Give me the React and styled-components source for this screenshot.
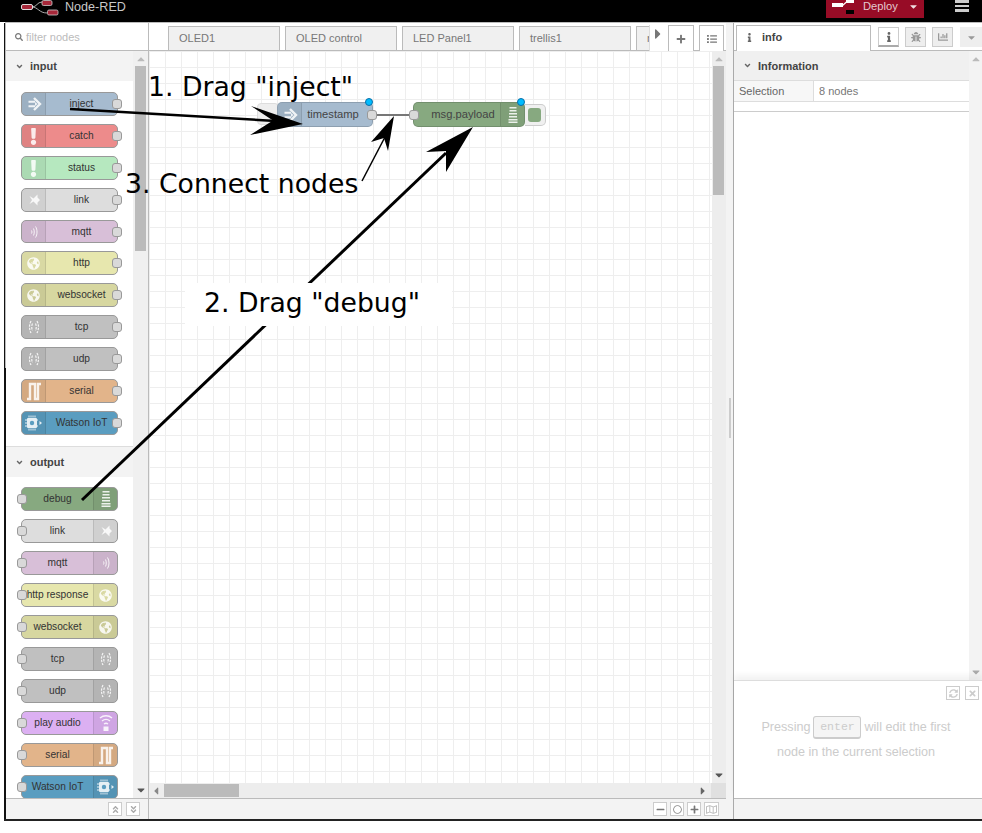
import React from 'react';
import styled, { createGlobalStyle } from 'styled-components';
import {
  FaSearch, FaAngleDown, FaCaretDown, FaCaretRight, FaCaretUp, FaPlus, FaList, FaInfo, FaBug, FaChartBar,
  FaMinus, FaRegCircle, FaRegMap, FaSyncAlt, FaTimes, FaAngleDoubleUp, FaAngleDoubleDown, FaExclamation, FaGlobeAmericas,
} from 'react-icons/fa';

const GlobalStyle = createGlobalStyle`
  html, body { margin: 0; padding: 0; background: #fff; }
  body { font-family: "Liberation Sans", Arial, sans-serif; color: #555; }
`;

const Page = styled.div`
  position: relative;
  width: 982px;
  height: 833px;
  overflow: hidden;
  background: #fff;
`;

const Header = styled.header`
  height: 22px;
  background: #000;
  display: flex;
  align-items: flex-start;
  color: #c8c8c8;
`;

const Brand = styled.div`
  display: flex;
  align-items: flex-start;
  gap: 6px;
  margin-left: 21px;
  font-size: 12.6px;
  line-height: 15px;
`;

const DeployButton = styled.div`
  margin-left: auto;
  width: 98px;
  height: 18px;
  background: #970c26;
  color: #e4c9cf;
  font-size: 11.2px;
  line-height: 13px;
  display: flex;
  align-items: flex-start;
  box-sizing: border-box;
  padding-left: 6px;

  svg { flex: none; }
  span { margin-left: 9px; }
  .caret { margin: 1px 0 0 10px; color: #f0e0e3; font-size: 11px; }
`;

const Burger = styled.div`
  width: 14px;
  margin: 0 13px 0 31px;
  display: flex;
  flex-direction: column;
  gap: 2px;

  i { display: block; height: 2.5px; background: #ccc; }
`;

const Main = styled.div`
  display: flex;
  height: 796px;
  margin-left: 4px;
  border-top: 1px solid #bbb;
  border-bottom: 2px solid #222;
  position: relative;

  &::before {
    content: "";
    position: absolute;
    left: 0;
    top: -1px;
    height: 345px;
    width: 1px;
    background: #fff;
  }
`;

const Palette = styled.aside`
  width: 145px;
  flex: none;
  box-sizing: border-box;
  border-left: 2px solid #111;
  border-right: 1px solid #bbb;
  display: flex;
  flex-direction: column;
  position: relative;

  &::before {
    content: "";
    position: absolute;
    left: -1px;
    top: -1px;
    height: 346px;
    width: 1px;
    background: #bbb;
  }
`;

const FilterRow = styled.div`
  height: 28px;
  flex: none;
  box-sizing: border-box;
  border-bottom: 1px solid #bbb;
  display: flex;
  align-items: center;
  gap: 3px;
  padding-left: 9px;
  font-size: 11px;
  color: #bbb;

  svg { color: #777; font-size: 8px; }
`;

const PaletteBody = styled.div`
  flex: 1;
  min-height: 0;
  display: flex;
`;

const PaletteList = styled.div`
  flex: 1;
  min-width: 0;
  overflow: hidden;
`;

const Category = styled.div`
  height: 30px;
  box-sizing: border-box;
  padding-left: 9px;
  background: #f3f3f3;
  display: flex;
  align-items: center;
  gap: 6px;
  font-size: 11px;
  font-weight: bold;
  color: #444;

  svg { font-size: 9px; color: #666; }
`;

const NodeList = styled.div`
  display: flex;
  flex-direction: column;
  gap: 8px;
  padding: ${p => p.$top}px 0 11px 15px;
  border-bottom: ${p => (p.$divided ? '1px solid #ddd' : 'none')};
`;

const PaletteNode = styled.div`
  position: relative;
  width: 97px;
  height: ${p => p.$height || 24}px;
  box-sizing: border-box;
  flex: none;
  border: 1px solid #999;
  border-radius: 5px;
  background: ${p => p.$color};
  display: flex;
  flex-direction: ${p => (p.$output ? 'row-reverse' : 'row')};
  font-size: 10.2px;
  color: #333;
`;

const NodeLabel = styled.div`
  flex: 1;
  min-width: 0;
  text-align: center;
  white-space: nowrap;
  line-height: 22px;
`;

const FlowLabel = styled(NodeLabel)`
  line-height: 23px;
  padding: 0 ${p => p.$padRight || 0}px 0 ${p => p.$padLeft || 0}px;
`;

const NodeIcon = styled.div`
  width: 24px;
  flex: none;
  box-sizing: border-box;
  background: rgba(0, 0, 0, 0.06);
  border-${p => (p.$output ? 'left' : 'right')}: 1px solid rgba(0, 0, 0, 0.1);
  border-radius: ${p => (p.$output ? '0 4px 4px 0' : '4px 0 0 4px')};
  display: flex;
  align-items: center;
  justify-content: center;
  color: rgba(255, 255, 255, 0.85);
`;

const Port = styled.span`
  position: absolute;
  top: 50%;
  ${p => (p.$left ? 'left: -5px;' : 'right: -5px;')}
  width: 8px;
  height: 8px;
  margin-top: -5px;
  border: 1px solid #999;
  border-radius: 3px;
  background: #d9d9d9;
`;

const VScroll = styled.div`
  width: ${p => p.$width}px;
  flex: none;
  background: ${p => p.$track};
  position: relative;
  display: flex;
  flex-direction: column;
  align-items: center;
  justify-content: space-between;
  padding: 2px 0;
  box-sizing: border-box;
  color: ${p => p.$arrow};
  font-size: 12px;

  svg { display: block; }
`;

const VThumb = styled.div`
  position: absolute;
  left: ${p => p.$left}px;
  right: 2px;
  top: 15px;
  height: ${p => p.$height}px;
  background: #bbb;
`;

const BarFooter = styled.div`
  height: 21px;
  flex: none;
  box-sizing: border-box;
  background: #f3f3f3;
  border-top: 1px solid #bbb;
  display: flex;
  align-items: center;
  justify-content: flex-end;
  gap: ${p => p.$gap}px;
  padding-right: ${p => p.$right}px;
`;

const FootButton = styled.div`
  width: ${p => p.$width || 14}px;
  height: 14px;
  box-sizing: border-box;
  border: 1px solid #ccc;
  background: #fff;
  color: ${p => p.$tone || '#888'};
  display: flex;
  align-items: center;
  justify-content: center;
  font-size: 9px;
`;

const Workspace = styled.main`
  width: 577px;
  flex: none;
  display: flex;
  flex-direction: column;
`;

const TabBar = styled.div`
  height: 28px;
  flex: none;
  box-sizing: border-box;
  border-bottom: 1px solid #bbb;
  display: flex;
  align-items: flex-end;
  padding-left: 19px;
`;

const FlowTab = styled.div`
  width: ${p => p.$width || 112}px;
  height: 25px;
  flex: none;
  box-sizing: border-box;
  margin-right: 5px;
  margin-bottom: -1px;
  padding: 5px 0 0 10px;
  border: 1px solid #bbb;
  border-bottom: 1px solid #bbb;
  background: #f0f0f0;
  overflow: hidden;
  white-space: nowrap;
  font-size: 11px;
  color: #777;
`;

const TabScroll = styled.div`
  width: 19px;
  height: 26px;
  flex: none;
  box-sizing: border-box;
  margin: 0 0 -1px -6px;
  background: #fff;
  border-left: 1px solid #ddd;
  color: #777;
  font-size: 16px;

  svg { display: block; margin: 1px 0 0 0; }
`;

const TabAction = styled.div`
  width: ${p => p.$width}px;
  height: 26px;
  flex: none;
  box-sizing: border-box;
  margin-right: 5px;
  margin-bottom: -1px;
  border: 1px solid #bbb;
  border-bottom: none;
  background: #fff;
  color: #777;
  font-size: 10px;
  display: flex;
  align-items: center;
  justify-content: center;
`;

const CanvasBody = styled.div`
  flex: 1;
  min-height: 0;
  display: flex;
`;

const Grid = styled.div`
  flex: 1;
  position: relative;
  background-color: #fff;
  background-image:
    linear-gradient(#eee 1px, transparent 1px),
    linear-gradient(90deg, #eee 1px, transparent 1px);
  background-size: 16px 16px;
`;

const HScroll = styled.div`
  height: 15px;
  flex: none;
  background: #ededed;
  display: flex;
  align-items: center;
  color: #888;
  font-size: 12px;
  padding-left: 1px;

  .left { transform: scaleX(-1); }
  .right { margin-left: auto; margin-right: 2px; color: #666; }
`;

const HThumb = styled.div`
  width: 75px;
  height: 13px;
  margin-left: 2px;
  background: #bbb;
`;

const ScrollCorner = styled.div`
  width: 15px;
  height: 15px;
  background: #e0e0e0;
`;

const FlowNode = styled.div`
  position: absolute;
  left: ${p => p.$x}px;
  top: 51px;
  width: ${p => p.$width}px;
  height: 25px;
  box-sizing: border-box;
  border: 1px solid rgba(0, 0, 0, 0.15);
  border-radius: 5px;
  background: ${p => p.$color};
  display: flex;
  flex-direction: ${p => (p.$output ? 'row-reverse' : 'row')};
  font-size: 11.2px;
  color: #444;
`;

const ChangedDot = styled.span`
  position: absolute;
  top: -5px;
  right: -1px;
  width: 6px;
  height: 6px;
  border: 1px solid #0a6fa8;
  border-radius: 50%;
  background: #00bcff;
`;

const StubLeft = styled.div`
  position: absolute;
  left: 108px;
  top: 52px;
  width: 22px;
  height: 22px;
  box-sizing: border-box;
  border: 1px solid #ddd;
  border-radius: 4px;
  background: #eee;
`;

const Wire = styled.div`
  position: absolute;
  left: 228px;
  top: 63px;
  width: 32px;
  height: 2px;
  background: #777;
`;

const DebugToggle = styled.div`
  position: absolute;
  left: 376px;
  top: 53px;
  width: 21px;
  height: 22px;
  box-sizing: border-box;
  border: 1px solid #ccc;
  border-left: none;
  border-radius: 0 5px 5px 0;
  background: #f0f0f0;
  padding: 3px 4px 3px 3px;

  i { display: block; width: 13px; height: 14px; border-radius: 3px; background: #87a980; }
`;

const Divider = styled.div`
  width: 7px;
  flex: none;
  background: #f3f3f3;
  display: flex;
  align-items: center;
  justify-content: center;

  i { display: block; width: 2px; height: 40px; margin-bottom: 6px; background: #ccc; }
`;

const Sidebar = styled.aside`
  flex: 1;
  min-width: 0;
  box-sizing: border-box;
  border-left: 1px solid #aaa;
  display: flex;
  flex-direction: column;
`;

const SideTabs = styled.div`
  height: 28px;
  flex: none;
  box-sizing: border-box;
  border-bottom: 1px solid #bbb;
  display: flex;
  align-items: flex-start;
  padding: 2px 0 0 2px;
`;

const SideTab = styled.div`
  width: 135px;
  height: 26px;
  flex: none;
  box-sizing: border-box;
  border: 1px solid #bbb;
  border-bottom: none;
  background: #fff;
  display: flex;
  align-items: center;
  gap: 8px;
  padding: 0 0 3px 8px;
  font-size: 11px;
  font-weight: bold;
  color: #444;

  svg { font-size: 9px; color: #666; }
`;

const SideButton = styled.div`
  width: 21px;
  height: 20px;
  flex: none;
  box-sizing: border-box;
  margin: 2px 0 0 ${p => p.$gap}px;
  border: 1px solid #ccc;
  border-bottom: ${p => (p.$active ? '2px solid #aaa' : '1px solid #ccc')};
  background: ${p => (p.$active ? '#fff' : '#eee')};
  color: ${p => (p.$active ? '#666' : '#999')};
  font-size: 10px;
  display: flex;
  align-items: center;
  justify-content: center;
`;

const SideMenu = styled.div`
  width: 22px;
  height: 20px;
  margin: 2px 0 0 7px;
  background: #eee;
  color: #999;
  font-size: 11px;
  display: flex;
  align-items: center;
  justify-content: center;
`;

const InfoPanel = styled.div`
  flex: 1;
  min-height: 0;
  display: flex;
`;

const InfoContent = styled.div`
  flex: 1;
  min-width: 0;
`;

const SectionHead = styled.div`
  height: 30px;
  box-sizing: border-box;
  border-bottom: 1px solid #ddd;
  background: #f0f0f0;
  display: flex;
  align-items: center;
  gap: 6px;
  padding-left: 9px;
  font-size: 11px;
  font-weight: bold;
  color: #444;

  svg { font-size: 9px; color: #666; }
`;

const InfoRow = styled.div`
  height: 21px;
  box-sizing: border-box;
  border-bottom: 1px solid #ddd;
  display: flex;
  font-size: 11px;
  line-height: 21px;
  color: #666;
`;

const InfoKey = styled.div`
  width: 80px;
  box-sizing: border-box;
  padding-left: 5px;
  background: #f7f7f7;
  border-right: 1px solid #ddd;
`;

const InfoValue = styled.div`
  padding-left: 5px;
  color: #777;
`;

const InfoGap = styled.div`
  height: 9px;
  border-bottom: 1px solid #ccc;
`;

const HelpPanel = styled.div`
  height: 118px;
  flex: none;
  box-sizing: border-box;
  border-top: 1px solid #ddd;
  box-shadow: 0 -5px 6px rgba(0, 0, 0, 0.05);
  position: relative;
  background: #fff;
  padding-top: 5px;
`;

const HelpTools = styled.div`
  display: flex;
  justify-content: flex-end;
  gap: 5px;
  padding-right: 3px;
`;

const HelpText = styled.p`
  margin: 15px 4px 0 0;
  text-align: center;
  font-size: 12.6px;
  line-height: 25px;
  color: #ccc;
`;

const Key = styled.span`
  display: inline-block;
  width: 48px;
  height: 23px;
  box-sizing: border-box;
  margin: 0 3px;
  border: 1px solid #ccc;
  border-bottom-width: 2px;
  border-radius: 3px;
  background: #f5f5f5;
  font-family: "Liberation Mono", monospace;
  font-size: 11.5px;
  line-height: 20px;
  vertical-align: middle;
`;

const Overlay = styled.svg`
  position: absolute;
  left: 0;
  top: 0;
  pointer-events: none;
`;

const Annotation = styled.div`
  position: absolute;
  left: ${p => p.$x}px;
  top: ${p => p.$y}px;
  font-family: "DejaVu Sans", sans-serif;
  font-size: 26.7px;
  line-height: 32px;
  color: #000;
  white-space: nowrap;
`;

const PaddedAnnotation = styled(Annotation)`
  box-sizing: border-box;
  width: 267px;
  height: 43px;
  padding: 4px 0 0 19px;
  background: #fff;
`;

/* node icons */
const Glyph = ({ children }) => (
  <svg width="16" height="18" viewBox="0 0 16 18" fill="currentColor" stroke="none">{children}</svg>
);

const InjectIcon = () => (
  <svg width="16" height="18" viewBox="0 0 16 18" fill="none" stroke="currentColor">
    <path d="M2.500 6.800h6.500M2.500 11.200h6.500" strokeWidth="2" />
    <path d="M8 3l6 6-6 6" strokeWidth="2.400" />
    <path d="M9 7l2.500 2L9 11z" fill="currentColor" stroke="none" />
  </svg>
);
const LinkIcon = () => (
  <Glyph><path d="M3.500 5l4 2.500L11.500 3.500v3L14 9l-2.500 2.500v3l-4-4-4 2.500 2.500-4z" /></Glyph>
);
const BridgeIcon = () => (
  <Glyph>
    <g fill="none" stroke="currentColor" strokeWidth="1">
      <path d="M5.500 7.500c.5 1 .5 2 0 3" />
      <path d="M7.500 5.500c1 2 1 5 0 7" />
      <path d="M9.500 3.500c2 3 2 8 0 11" />
    </g>
  </Glyph>
);
const TcpIcon = () => (
  <Glyph>
    <g fill="none" stroke="currentColor" strokeWidth="1.200" strokeDasharray="2.500 1">
      <path d="M6.500 5.500c-1 2-1 5 0 7" />
      <path d="M5 3c-2 4-2 8 0 12" />
      <path d="M9.500 5.500c1 2 1 5 0 7" />
      <path d="M11 3c2 4 2 8 0 12" />
    </g>
  </Glyph>
);
const SerialIcon = () => (
  <svg width="16" height="20" viewBox="0 0 16 20" fill="none" stroke="currentColor" strokeWidth="2.400">
    <path d="M1 18h3V3h5v15h3V3h3" />
  </svg>
);
const ChipIcon = () => (
  <svg width="18" height="16" viewBox="0 0 18 16" stroke="currentColor">
    <rect x="2" y="3" width="10" height="10" rx="1" fill="currentColor" stroke="none" />
    <circle cx="7" cy="8" r="2.200" fill="#5a9dc0" stroke="none" />
    <path d="M4 0.500v2M6 0.500v2M8 0.500v2M10 0.500v2M4 13.500v2M6 13.500v2M8 13.500v2M10 13.500v2M0 5h2M0 8h2M0 11h2M12 5h1M12 11h1" strokeWidth="1" />
    <path d="M14.500 6l2.500 2-2.500 2z" fill="currentColor" stroke="none" />
  </svg>
);
const DebugIcon = () => (
  <svg width="10" height="16" viewBox="0 0 10 16" fill="currentColor">
    <rect x="1.500" y="0" width="7" height="1.500" />
    <rect x="1.500" y="3" width="7" height="1.500" />
    <rect x="1" y="6" width="8" height="1.500" />
    <rect x="1" y="9" width="8" height="1.500" />
    <rect x="0.500" y="12" width="9" height="1.500" />
    <rect x="0.500" y="14.500" width="9" height="1.500" />
  </svg>
);
const AudioIcon = () => (
  <svg width="14" height="18" viewBox="0 0 14 18" fill="none" stroke="currentColor" strokeWidth="1.400">
    <path d="M1 4c3.500-3 8.500-3 12 0" />
    <path d="M3 7c2.500-2 5.500-2 8 0" />
    <path d="M5 10c1.500-1 2.500-1 4 0" />
    <rect x="4.500" y="12.500" width="5" height="4.500" fill="currentColor" stroke="none" />
  </svg>
);
const Bang = () => <FaExclamation size={17} />;
const Globe = () => <FaGlobeAmericas size={13} />;

const Logo = () => (
  <svg width="38" height="16" viewBox="0 0 38 16">
    <path d="M11 7c5 0 5-5 10-5M11 7c6 0 7 6 15 6" fill="none" stroke="#aaa" strokeWidth="1" />
    <rect x="0.500" y="4.500" width="11" height="5" rx="1.500" fill="#a6283a" stroke="#ddd" strokeWidth="1" />
    <rect x="21" y="0.500" width="10" height="5" rx="1.500" fill="#a6283a" stroke="#ccc" strokeWidth="0.800" />
    <rect x="26.500" y="10" width="10.500" height="5" rx="1.500" fill="#a6283a" stroke="#ccc" strokeWidth="0.800" />
  </svg>
);

const DeployIcon = () => (
  <svg width="22" height="15" viewBox="0 0 22 15">
    <rect x="0" y="3" width="11" height="4" fill="#fff" />
    <path d="M10 6L15 1.500" stroke="#fff" strokeWidth="1.200" />
    <rect x="14" y="0" width="8" height="3" fill="#fff" />
    <rect x="14" y="10" width="8" height="4" fill="#000" />
  </svg>
);

const inputNodes = [
  { label: 'inject', color: '#a6bbcf', icon: <InjectIcon /> },
  { label: 'catch', color: '#ed8b8b', icon: <Bang /> },
  { label: 'status', color: '#b6e8bf', icon: <Bang /> },
  { label: 'link', color: '#dddddd', icon: <LinkIcon /> },
  { label: 'mqtt', color: '#d8bfd8', icon: <BridgeIcon />, height: 23 },
  { label: 'http', color: '#e7e7ae', icon: <Globe /> },
  { label: 'websocket', color: '#d7d7a0', icon: <Globe /> },
  { label: 'tcp', color: '#c0c0c0', icon: <TcpIcon /> },
  { label: 'udp', color: '#c0c0c0', icon: <TcpIcon /> },
  { label: 'serial', color: '#e2b48a', icon: <SerialIcon /> },
  { label: 'Watson IoT', color: '#5a9dc0', icon: <ChipIcon /> },
];

const outputNodes = [
  { label: 'debug', color: '#87a980', icon: <DebugIcon /> },
  { label: 'link', color: '#dddddd', icon: <LinkIcon /> },
  { label: 'mqtt', color: '#d8bfd8', icon: <BridgeIcon /> },
  { label: 'http response', color: '#e7e7ae', icon: <Globe /> },
  { label: 'websocket', color: '#d7d7a0', icon: <Globe /> },
  { label: 'tcp', color: '#c0c0c0', icon: <TcpIcon /> },
  { label: 'udp', color: '#c0c0c0', icon: <TcpIcon /> },
  { label: 'play audio', color: '#dcb0f2', icon: <AudioIcon /> },
  { label: 'serial', color: '#e2b48a', icon: <SerialIcon /> },
  { label: 'Watson IoT', color: '#5a9dc0', icon: <ChipIcon /> },
];

const flowTabs = ['OLED1', 'OLED control', 'LED Panel1', 'trellis1'];

const App = () => {
  return (
    <Page>
      <GlobalStyle />
      <Header>
        <Brand><Logo />Node-RED</Brand>
        <DeployButton>
          <DeployIcon />
          <span>Deploy</span>
          <FaCaretDown className="caret" />
        </DeployButton>
        <Burger><i /><i /><i /></Burger>
      </Header>

      <Main>
        <Palette>
          <FilterRow><FaSearch />filter nodes</FilterRow>
          <PaletteBody>
            <PaletteList>
              <Category><FaAngleDown />input</Category>
              <NodeList $top={11} $divided>
                {inputNodes.map(n => (
                  <PaletteNode key={n.label} $color={n.color} $height={n.height}>
                    <NodeIcon>{n.icon}</NodeIcon>
                    <NodeLabel>{n.label}</NodeLabel>
                    <Port />
                  </PaletteNode>
                ))}
              </NodeList>
              <Category><FaAngleDown />output</Category>
              <NodeList $top={10}>
                {outputNodes.map(n => (
                  <PaletteNode key={n.label} $output $color={n.color}>
                    <NodeIcon $output>{n.icon}</NodeIcon>
                    <NodeLabel>{n.label}</NodeLabel>
                    <Port $left />
                  </PaletteNode>
                ))}
              </NodeList>
            </PaletteList>
            <VScroll $width={15} $track="#f0f0f0" $arrow="#555">
              <FaCaretUp color="#bbb" />
              <VThumb $left={2} $height={185} />
              <FaCaretDown />
            </VScroll>
          </PaletteBody>
          <BarFooter $gap={4} $right={8}>
            <FootButton $tone="#aaa"><FaAngleDoubleUp /></FootButton>
            <FootButton $tone="#aaa"><FaAngleDoubleDown /></FootButton>
          </BarFooter>
        </Palette>

        <Workspace>
          <TabBar>
            {flowTabs.map(t => <FlowTab key={t}>{t}</FlowTab>)}
            <FlowTab $width={14}>node</FlowTab>
            <TabScroll><FaCaretRight /></TabScroll>
            <TabAction $width={26}><FaPlus /></TabAction>
            <TabAction $width={25}><FaList /></TabAction>
          </TabBar>
          <CanvasBody>
            <Grid>
              <StubLeft />
              <FlowNode $x={128} $width={96} $color="#a6bbcf">
                <NodeIcon><InjectIcon /></NodeIcon>
                <FlowLabel $padRight={8}>timestamp</FlowLabel>
                <Port />
                <ChangedDot />
              </FlowNode>
              <Wire />
              <FlowNode $x={264} $width={112} $color="#87a980" $output>
                <NodeIcon $output><DebugIcon /></NodeIcon>
                <FlowLabel $padLeft={12}>msg.payload</FlowLabel>
                <Port $left />
                <ChangedDot />
              </FlowNode>
              <DebugToggle><i /></DebugToggle>
            </Grid>
            <VScroll $width={14} $track="#ededed" $arrow="#555">
              <FaCaretUp color="#bbb" />
              <VThumb $left={1} $height={129} />
              <FaCaretDown />
            </VScroll>
          </CanvasBody>
          <HScroll>
            <FaCaretRight className="left" />
            <HThumb />
            <FaCaretRight className="right" />
            <ScrollCorner />
          </HScroll>
          <BarFooter $gap={3} $right={7}>
            <FootButton $tone="#777"><FaMinus /></FootButton>
            <FootButton $tone="#888"><FaRegCircle /></FootButton>
            <FootButton $tone="#777"><FaPlus /></FootButton>
            <FootButton $width={15} $tone="#bbb"><FaRegMap size={11} /></FootButton>
          </BarFooter>
        </Workspace>

        <Divider><i /></Divider>

        <Sidebar>
          <SideTabs>
            <SideTab><FaInfo />info</SideTab>
            <SideButton $gap={7} $active><FaInfo /></SideButton>
            <SideButton $gap={6}><FaBug /></SideButton>
            <SideButton $gap={6}><FaChartBar /></SideButton>
            <SideMenu><FaCaretDown /></SideMenu>
          </SideTabs>
          <InfoPanel>
            <InfoContent>
              <SectionHead><FaAngleDown />Information</SectionHead>
              <InfoRow>
                <InfoKey>Selection</InfoKey>
                <InfoValue>8 nodes</InfoValue>
              </InfoRow>
              <InfoGap />
            </InfoContent>
            <VScroll $width={13} $track="#f3f3f3" $arrow="#aaa">
              <FaCaretUp color="#bbb" />
              <FaCaretDown />
            </VScroll>
          </InfoPanel>
          <HelpPanel>
            <HelpTools>
              <FootButton $tone="#ccc"><FaSyncAlt /></FootButton>
              <FootButton $tone="#ccc"><FaTimes /></FootButton>
            </HelpTools>
            <HelpText>
              Pressing<Key>enter</Key>will edit the first<br />
              node in the current selection
            </HelpText>
          </HelpPanel>
          <BarFooter $gap={0} $right={0} />
        </Sidebar>
      </Main>

      {/* tutorial arrows drawn over the editor */}
      <Overlay width="982" height="833" viewBox="0 0 982 833">
        <path d="M70 109L276 121" stroke="#000" strokeWidth="2.500" />
        <path d="M303 124L251 106L273 120.500L250 135z" fill="#000" />
        <path d="M82 500L446 153" stroke="#000" strokeWidth="3" />
        <path d="M473 127L426 152L446 151L446 172z" fill="#000" />
        <path d="M362 181L385 137" stroke="#000" strokeWidth="1.500" />
        <path d="M394 116L371 142L384 138L388 151z" fill="#000" />
      </Overlay>
      <Annotation $x={148} $y={71}>1. Drag "inject"</Annotation>
      <Annotation $x={125} $y={168}>3. Connect nodes</Annotation>
      <PaddedAnnotation $x={185} $y={283}>2. Drag "debug"</PaddedAnnotation>
    </Page>
  );
};

export default App;
